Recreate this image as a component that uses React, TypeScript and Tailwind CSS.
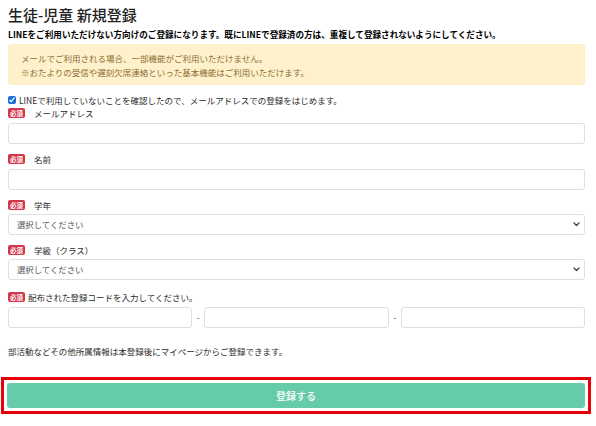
import React from 'react';

const Badge = () => (
    <span className="inline-flex items-center justify-center w-[17px] h-[10px] rounded-[2px] bg-[#d63447] text-white text-[6.5px] font-bold leading-none">
        必須
    </span>
);

const FieldLabel = ({ text, tight }: { text: string; tight?: boolean }) => (
    <div className="flex items-center h-[12px] leading-[12px]">
        <Badge />
        <span className={tight ? 'ml-[3px]' : 'ml-[9px]'}>{text}</span>
    </div>
);

const TextInput = () => (
    <input
        type="text"
        className="block w-full h-[21px] rounded-[3px] border border-[#dcdfe3] bg-white px-2 outline-none"
    />
);

const Select = () => (
    <div className="relative">
        <select className="block w-full h-[21px] appearance-none rounded-[3px] border border-[#dcdfe3] bg-white pl-[8px] text-[8.4px] text-[#555]">
            <option>選択してください</option>
        </select>
        {/* chevron */}
        <svg
            className="pointer-events-none absolute right-[5px] top-[8px]"
            width="7"
            height="5"
            viewBox="0 0 7 5"
            fill="none"
        >
            <path d="M1 1l2.5 2.5L6 1" stroke="#444" strokeWidth="1.4" strokeLinecap="round" strokeLinejoin="round" />
        </svg>
    </div>
);

export default function App() {
    return (
        <div className="w-[596px] h-[426px] overflow-hidden bg-white pl-2 pr-[11px] text-[8.5px] text-[#2b2b2b] font-['Noto_Sans_CJK_JP',sans-serif]">
            <h1 className="mt-[4px] text-[15px] leading-[22px] font-medium text-[#222]">生徒-児童 新規登録</h1>
            <p className="mt-[2px] text-[8.6px] leading-[12px] font-bold text-black">
                LINEをご利用いただけない方向けのご登録になります。既にLINEで登録済の方は、重複して登録されないようにしてください。
            </p>

            <div className="mt-[4px] rounded-[3px] border border-[#fdefc4] bg-[#fff1cb] pl-[12px] pt-[6px] pb-[5px] text-[8.5px] leading-[14px] text-[#8c6d33]">
                <p>メールでご利用される場合、一部機能がご利用いただけません。</p>
                <p>※おたよりの受信や遅刻欠席連絡といった基本機能はご利用いただけます。</p>
            </div>

            <label className="mt-[9px] flex items-center h-[12px] leading-[12px]">
                <input type="checkbox" defaultChecked className="w-[8px] h-[8px] m-0 accent-[#1a6fd8]" />
                <span className="ml-[3px]">LINEで利用していないことを確認したので、メールアドレスでの登録をはじめます。</span>
            </label>

            <div className="mt-[1px]">
                <FieldLabel text="メールアドレス" />
                <div className="mt-[4px]">
                    <TextInput />
                </div>
            </div>

            <div className="mt-[9px]">
                <FieldLabel text="名前" />
                <div className="mt-[4px]">
                    <TextInput />
                </div>
            </div>

            <div className="mt-[9px]">
                <FieldLabel text="学年" />
                <div className="mt-[3px]">
                    <Select />
                </div>
            </div>

            <div className="mt-[9px]">
                <FieldLabel text="学級（クラス）" />
                <div className="mt-[3px]">
                    <Select />
                </div>
            </div>

            <div className="mt-[11px]">
                <FieldLabel text="配布された登録コードを入力してください。" tight />
                <div className="mt-[4px] flex items-center">
                    <div className="flex-1">
                        <TextInput />
                    </div>
                    <span className="w-[12px] text-center text-[#555]">-</span>
                    <div className="flex-1">
                        <TextInput />
                    </div>
                    <span className="w-[12px] text-center text-[#555]">-</span>
                    <div className="flex-1">
                        <TextInput />
                    </div>
                </div>
            </div>

            <p className="mt-[17px] leading-[12px]">部活動などその他所属情報は本登録後にマイページからご登録できます。</p>

            <div className="mt-[20px] ml-[-7px] mr-[-6px] border-[3px] border-[#e8000b] p-[3px]">
                <button
                    type="button"
                    className="block w-full h-[25px] rounded-[3px] bg-[#66cba9] text-[10px] font-medium text-white"
                >
                    登録する
                </button>
            </div>
        </div>
    );
}
